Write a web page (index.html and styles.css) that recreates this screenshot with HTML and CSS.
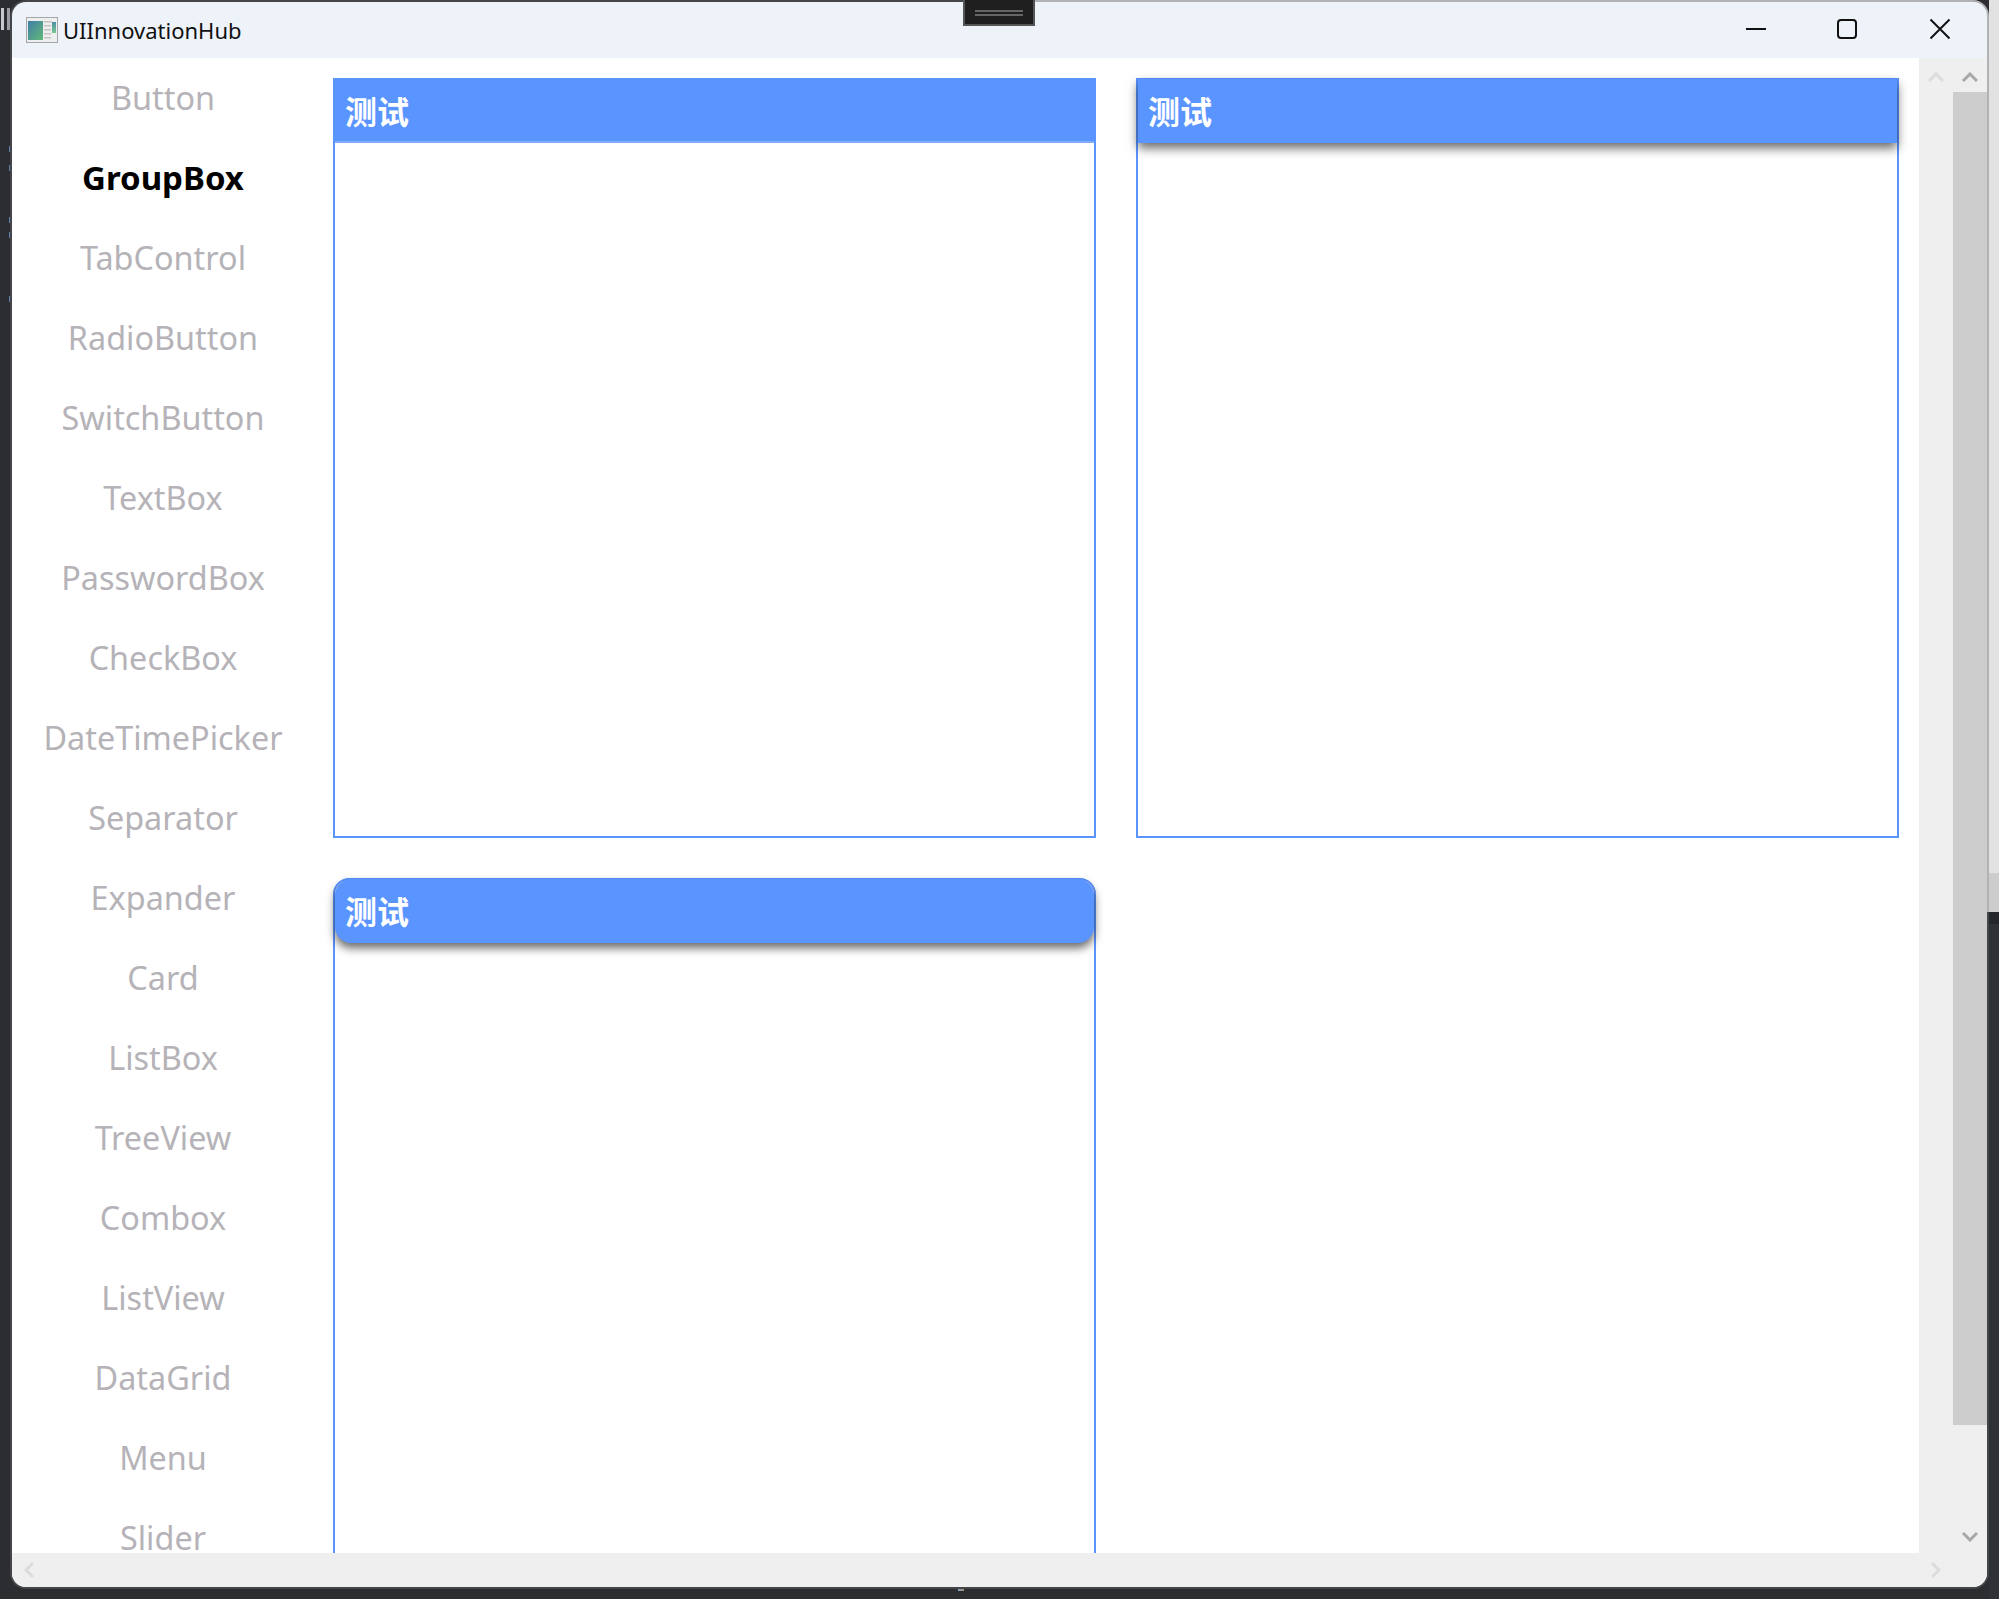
FILE: index.html
```html
<!DOCTYPE html>
<html lang="zh-CN">
  <head>
    <title>UIInnovationHub</title>
    <meta charset="UTF-8" />
    <link rel="stylesheet" href="styles.css">
  </head>

  <body>
    <div class="desktop">
      <span class="peek peek-bars"></span>
      <span class="peek peek-a"></span>
      <span class="peek peek-b"></span>
      <span class="peek peek-c"></span>
      <span class="peek peek-d"></span>
      <span class="peek peek-e"></span>
      <span class="peek peek-f"></span>

      <div class="window">
        <div class="titlebar">
          <svg class="app-icon" width="32" height="26" viewBox="0 0 32 26">
            <defs>
              <linearGradient id="panel" x1="0" y1="0" x2="1" y2="1">
                <stop offset="0" stop-color="#3f7fa8" />
                <stop offset="1" stop-color="#62b878" />
              </linearGradient>
              <linearGradient id="strip" x1="0" y1="0" x2="0" y2="1">
                <stop offset="0" stop-color="#4a90a8" />
                <stop offset="1" stop-color="#7cc890" />
              </linearGradient>
            </defs>
            <rect x="0.5" y="0.5" width="31" height="25" fill="#eeeeee" stroke="#a4a8aa" />
            <rect x="2" y="4" width="15" height="19" fill="url(#panel)" />
            <rect x="18" y="4" width="8" height="1.5" fill="#c4c4c4" />
            <rect x="18" y="8" width="7" height="1.5" fill="#c4c4c4" />
            <rect x="18" y="12" width="7" height="1.5" fill="#c4c4c4" />
            <rect x="18" y="16" width="7" height="1.5" fill="#c4c4c4" />
            <rect x="18" y="20" width="7" height="1.5" fill="#c4c4c4" />
            <rect x="26" y="5" width="4" height="11" fill="url(#strip)" />
          </svg>
          <span class="app-title">UIInnovationHub</span>
          <div class="win-buttons">
            <button class="win-btn" type="button">
              <svg width="22" height="22" viewBox="0 0 22 22"><path d="M1 11H21" /></svg>
            </button>
            <button class="win-btn maximize" type="button">
              <svg width="22" height="22" viewBox="0 0 22 22"><rect x="2" y="2" width="18" height="18" rx="3" /></svg>
            </button>
            <button class="win-btn" type="button">
              <svg width="22" height="22" viewBox="0 0 22 22"><path d="M1.5 1.5L20.5 20.5M20.5 1.5L1.5 20.5" /></svg>
            </button>
          </div>
        </div>

        <div class="shell">
          <div class="viewport">
            <ul class="nav">
              <li>Button</li>
              <li class="active">GroupBox</li>
              <li>TabControl</li>
              <li>RadioButton</li>
              <li>SwitchButton</li>
              <li>TextBox</li>
              <li>PasswordBox</li>
              <li>CheckBox</li>
              <li>DateTimePicker</li>
              <li>Separator</li>
              <li>Expander</li>
              <li>Card</li>
              <li>ListBox</li>
              <li>TreeView</li>
              <li>Combox</li>
              <li>ListView</li>
              <li>DataGrid</li>
              <li>Menu</li>
              <li>Slider</li>
            </ul>

            <div class="cards">
              <div class="card">
                <div class="card-head">测试</div>
              </div>
              <div class="card">
                <div class="card-head shadow">测试</div>
              </div>
              <div class="card round">
                <div class="card-head shadow">测试</div>
              </div>
            </div>
          </div>

          <div class="vbar inner">
            <span class="arrow">
              <svg class="faint" width="16" height="10" viewBox="0 0 16 10"><path d="M1 9L8 2L15 9" /></svg>
            </span>
          </div>

          <div class="vbar outer">
            <span class="arrow">
              <svg width="16" height="10" viewBox="0 0 16 10"><path d="M1 9L8 2L15 9" /></svg>
            </span>
            <div class="thumb"></div>
            <span class="arrow down">
              <svg width="16" height="10" viewBox="0 0 16 10"><path d="M1 1L8 8L15 1" /></svg>
            </span>
          </div>

          <div class="hbar">
            <span class="arrow">
              <svg class="faint" width="10" height="16" viewBox="0 0 10 16"><path d="M9 1L2 8L9 15" /></svg>
            </span>
            <span class="arrow">
              <svg class="faint" width="10" height="16" viewBox="0 0 10 16"><path d="M1 1L8 8L1 15" /></svg>
            </span>
          </div>
        </div>
      </div>

      <div class="drag-handle"><i></i><i></i></div>
    </div>
  </body>
</html>
```

FILE: styles.css
```css
body {
  margin: 0;
  overflow: hidden;
  background-color: #2b2d31;
  font-family: "Noto Sans", "Noto Sans CJK SC", sans-serif;
}

.desktop {
  position: relative;
  width: 1999px;
  height: 1599px;
  overflow: hidden;
  background: linear-gradient(#e2e2e2 0 873px, #cdcdcd 873px 912px, #23272b 912px 924px, #2e3237 924px) right top / 10px 100% no-repeat,
    #2b2d31;
}

/* bits of the windows behind, only the edges show */
.peek {
  position: absolute;
}

.peek-bars {
  left: 1px;
  top: 8px;
  width: 10px;
  height: 22px;
  background: linear-gradient(90deg, #c8c8cc 0 3px, #2b2d31 3px 6px, #9a9ca2 6px 9px, #2b2d31 9px);
}

.peek-a,
.peek-b,
.peek-c,
.peek-d,
.peek-e {
  left: 9px;
  width: 3px;
  height: 6px;
  background-color: #5d80b0;
}

.peek-a { top: 146px; }
.peek-b { top: 165px; }
.peek-c { top: 217px; }
.peek-d { top: 232px; }
.peek-e { top: 296px; }

.peek-f {
  left: 958px;
  top: 1587px;
  width: 6px;
  height: 4px;
  background: linear-gradient(90deg, #7fa5c4, #a08a70);
}

.window {
  position: absolute;
  left: 10px;
  top: 0;
  width: 1979px;
  height: 1589px;
  box-sizing: border-box;
  padding: 2px;
  display: flex;
  flex-direction: column;
  border-radius: 16px;
  background: linear-gradient(90deg, #45464a 0 1025px, #b2b2b4 1025px) left top / 100% 912px no-repeat,
    #45464a;
}

.titlebar {
  flex: none;
  height: 56px;
  display: flex;
  align-items: center;
  padding-left: 14px;
  background-color: #eef3fa;
  border-radius: 14px 14px 0 0;
}

.app-icon {
  flex: none;
}

.app-title {
  margin-left: 5px;
  font-size: 22px;
  color: #111;
}

.win-buttons {
  display: flex;
  margin-left: auto;
  padding-right: 1px;
  height: 54px;
  align-self: flex-start;
}

.win-btn {
  width: 92px;
  padding: 0;
  border: none;
  background: none;
  display: flex;
  align-items: center;
  justify-content: center;
}

.win-btn svg {
  fill: none;
  stroke: #111;
  stroke-width: 2;
}

.win-btn.maximize svg {
  margin-right: 2px;
}

.shell {
  flex: 1;
  min-height: 0;
  display: grid;
  grid-template-columns: 1907px 34px 34px;
  grid-template-rows: 1495px 34px;
  background-color: #efefef;
  border-radius: 0 0 14px 14px;
  overflow: hidden;
}

.viewport {
  grid-column: 1;
  grid-row: 1;
  display: flex;
  align-items: flex-start;
  overflow: hidden;
  background-color: #fff;
}

.nav {
  flex: none;
  width: 302px;
  margin: 0;
  padding: 0;
  list-style: none;
}

.nav li {
  height: 80px;
  display: flex;
  align-items: center;
  justify-content: center;
  font-size: 32.4px;
  line-height: 0.9;
  color: #b5b3b8;
}

.nav .active {
  font-size: 33px;
  font-weight: bold;
  color: #000;
}

.cards {
  display: grid;
  grid-template-columns: 763px 763px;
  grid-auto-rows: 760px;
  gap: 40px;
  padding: 20px 0 0 19px;
}

.card {
  box-sizing: border-box;
  border: 2px solid #5a94ff;
}

.card-head {
  height: 62px;
  margin-top: -1px;
  padding-left: 10px;
  display: flex;
  align-items: center;
  font-size: 32px;
  font-weight: bold;
  color: #fff;
  background-color: #5a94ff;
  border-bottom: 2px solid #7fadff;
}

.card-head.shadow {
  box-sizing: border-box;
  border-bottom: none;
  height: 64px;
  padding-bottom: 2px;
  box-shadow: 0 5px 10px rgba(0, 0, 0, 0.6);
}

.card.round {
  border-radius: 16px 16px 0 0;
}

.card.round .card-head {
  border-radius: 16px;
}

.vbar {
  grid-row: 1;
  display: flex;
  flex-direction: column;
  background-color: #efefef;
}

.vbar.inner {
  grid-column: 2;
}

.vbar.outer {
  grid-column: 3;
  grid-row: 1 / span 2;
}

.arrow {
  flex: none;
  width: 34px;
  height: 34px;
  display: flex;
  align-items: center;
  justify-content: center;
}

.vbar .arrow:first-child {
  padding-top: 4px;
  height: 30px;
}

.arrow svg {
  fill: none;
  stroke: #a8a8a8;
  stroke-width: 3;
}

.arrow svg.faint {
  stroke: #dcdcdc;
}

.thumb {
  flex: none;
  height: 1333px;
  background-color: #cdcdcd;
}

.arrow.down {
  margin-top: auto;
  margin-bottom: 33px;
}

.hbar {
  grid-column: 1 / span 2;
  grid-row: 2;
  display: flex;
  justify-content: space-between;
  background-color: #efefef;
}

.drag-handle {
  position: absolute;
  left: 963px;
  top: 0;
  width: 72px;
  height: 26px;
  box-sizing: border-box;
  padding-top: 10px;
  background-color: #1f1f1f;
  border: 2px solid #555;
  border-top: none;
}

.drag-handle i {
  display: block;
  height: 2px;
  margin: 0 10px 2px;
  background-color: #666;
}
```
